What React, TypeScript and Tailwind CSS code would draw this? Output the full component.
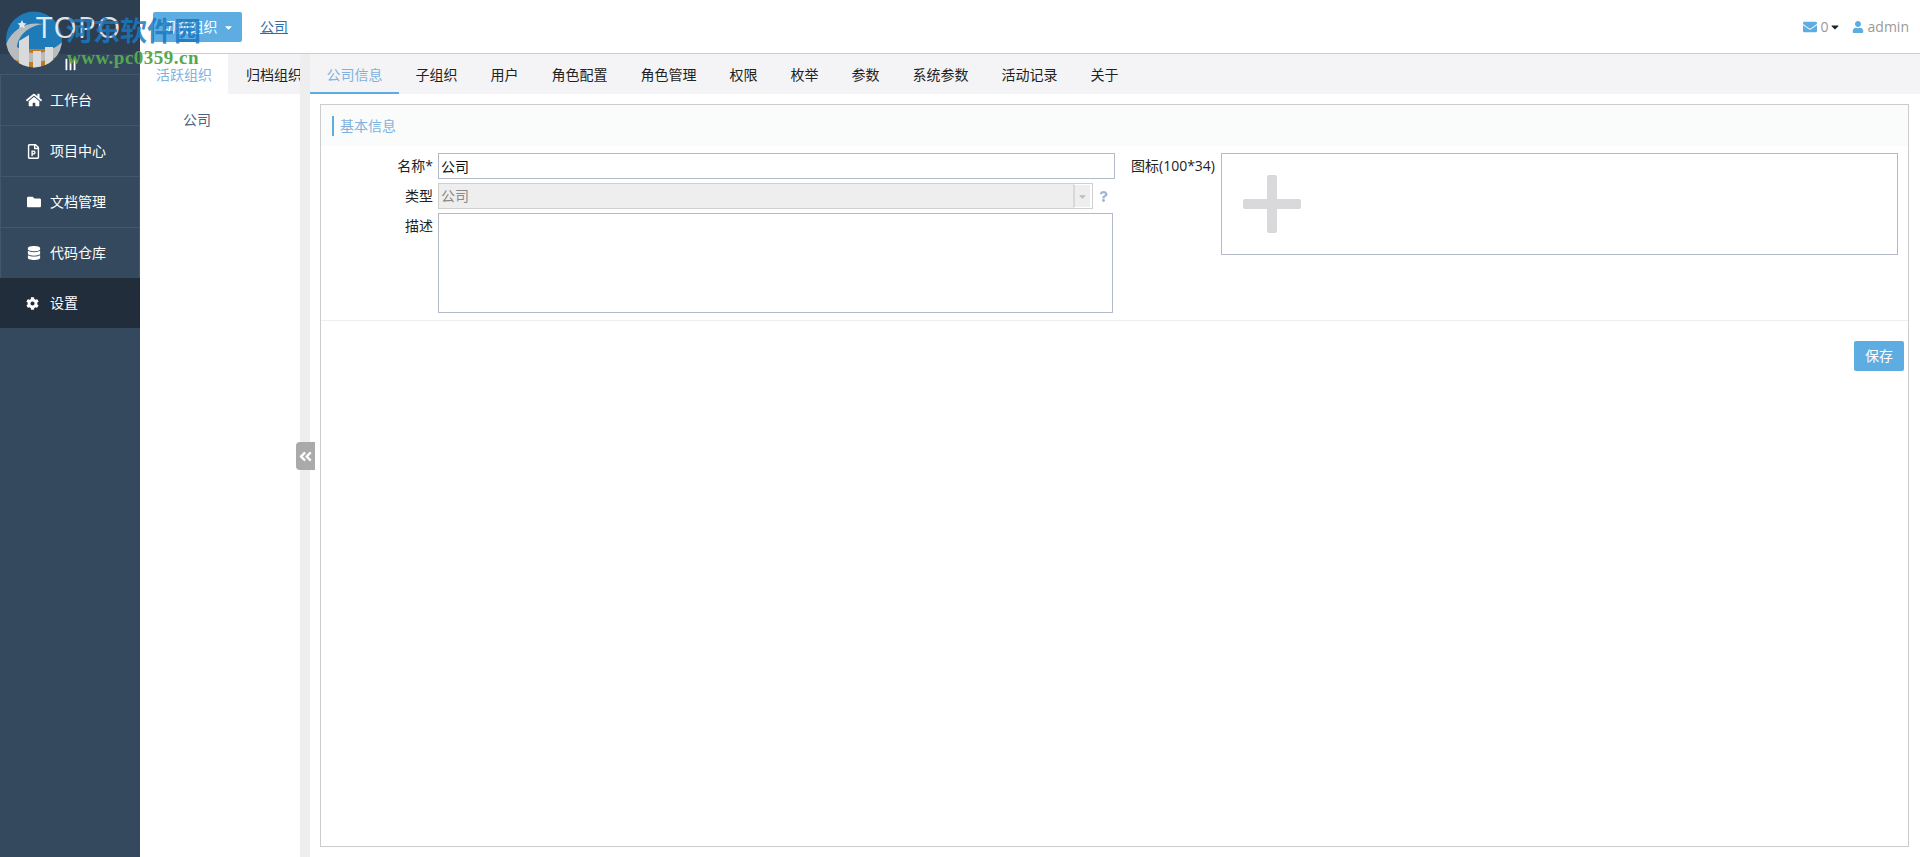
import { FaHome, FaRegFilePowerpoint, FaFolder, FaDatabase, FaCog, FaEnvelope, FaUser, FaAngleDoubleLeft, FaCaretDown, FaBars, FaQuestion } from 'react-icons/fa';

const MENU = [
  { name: '工作台', icon: FaHome, size: 16 },
  { name: '项目中心', icon: FaRegFilePowerpoint, size: 15 },
  { name: '文档管理', icon: FaFolder, size: 14 },
  { name: '代码仓库', icon: FaDatabase, size: 14 },
];

const TABS = ['子组织', '用户', '角色配置', '角色管理', '权限', '枚举', '参数', '系统参数', '活动记录', '关于'];

function WatermarkLogo() {
  return (
    <svg className="absolute left-[5px] top-[11px] z-[5]" width="58" height="57" viewBox="0 0 58 57">
      <defs>
        <clipPath id="disc">
          <circle cx="29" cy="28.5" r="28" />
        </clipPath>
      </defs>
      <g clipPath="url(#disc)">
        <rect width="58" height="57" fill="#1f7ab8" />
        <rect y="38" width="58" height="19" fill="#c07a22" />
        <path d="M0 36 C6 18 22 10 38 13 C24 15 13 24 12 36 C24 46 44 44 58 30 L58 42 C44 52 18 54 3 46 Z" fill="#b9bcbf" />
        <path d="M14 30 L24 24 L24 57 L14 57 Z" fill="#d8dadc" />
        <rect x="28" y="40" width="8" height="17" fill="#d8dadc" />
        <rect x="40" y="36" width="8" height="21" fill="#d8dadc" />
        <path d="M17 9 l1.4 3 3 .4 -2.2 2 .6 3 -2.8 -1.5 -2.8 1.5 .6 -3 -2.2 -2 3 -.4z" fill="#e5e7ea" />
      </g>
    </svg>
  );
}

function WatermarkText() {
  return (
    <div className="absolute left-0 top-0 z-20 h-[70px] w-[210px] pointer-events-none">
      <span className="absolute left-[66px] top-[10px] whitespace-nowrap text-[27px] leading-[40px] font-bold text-[#1a78c0]/85 font-['Noto_Sans_CJK_SC',sans-serif]">
        河东软件园
      </span>
      <span className="absolute left-[67px] top-[48px] whitespace-nowrap text-[19px] leading-[20px] font-bold tracking-[0.5px] text-[#55a84e] font-['Liberation_Serif',serif]">
        www.pc0359.cn
      </span>
    </div>
  );
}

function Sidebar() {
  return (
    <aside className="flex w-[140px] shrink-0 flex-col bg-[#34495e]">
      <div className="flex h-[54px] items-center bg-[#2c3e50] pl-[36px]">
        <span className="relative z-10 text-[30px] leading-none tracking-[1px] text-white/85">TOPO</span>
      </div>
      <div className="flex h-[20px] items-center justify-center">
        <FaBars className="rotate-90 text-white" size={13} />
      </div>
      {MENU.map((item) => (
        <div
          key={item.name}
          className="flex h-[51px] items-center gap-[10px] border-x border-t border-[#41576d] pl-[26px] text-sm text-white"
        >
          <span className="flex w-[13px] justify-center">
            <item.icon size={item.size} className="shrink-0" />
          </span>
          <span>{item.name}</span>
        </div>
      ))}
      <div className="flex h-[50px] items-center gap-[11px] bg-[#212d3b] pl-[26px] text-sm text-white">
        <FaCog size={13} />
        <span>设置</span>
      </div>
    </aside>
  );
}

export default function App() {
  return (
    <div className="relative flex h-screen w-full overflow-hidden bg-white font-['Open_Sans','Noto_Sans_CJK_SC',sans-serif] text-sm text-[#222]">
      <WatermarkLogo />
      <WatermarkText />
      <Sidebar />
      <div className="flex min-w-0 flex-1 flex-col">
        {/* Top bar */}
        <header className="flex h-[54px] shrink-0 items-center border-b border-[#cccccc] pl-[13px] pr-[11px] pt-[1px]">
          <button className="flex h-[30px] w-[89px] items-center justify-center gap-[5px] rounded-[2px] bg-[#5dade2] text-sm text-white">
            切换组织
            <FaCaretDown size={11} />
          </button>
          <a className="ml-[18px] text-sm text-[#2f6ea5] underline">公司</a>
          <div className="ml-auto flex items-center text-sm text-[#999]">
            <FaEnvelope className="text-[#5dade2]" size={14} />
            <span className="ml-[4px]">0</span>
            <FaCaretDown className="text-[#222]" size={12} />
            <FaUser className="ml-[11px] text-[#5dade2]" size={12} />
            <span className="ml-[4px]">admin</span>
          </div>
        </header>

        <div className="flex min-h-0 flex-1">
          {/* Organisation column */}
          <div className="flex w-[160px] shrink-0 flex-col overflow-hidden">
            <div className="flex h-[40px] shrink-0 whitespace-nowrap pt-[1px]">
              <div className="flex w-[88px] items-center justify-center text-[#7fb2e0]">活跃组织</div>
              <div className="mt-[-1px] flex w-[72px] items-center overflow-hidden rounded-bl-[2px] bg-[#f3f3f5] pl-[18px] pt-[1px] text-[#222]">
                <span>归档组织</span>
              </div>
            </div>
            <div className="pl-[43px] pt-[16px] text-[#4a6484]">公司</div>
          </div>

          {/* Gutter */}
          <div className="relative w-[10px] shrink-0 bg-[#eeeeee]">
            <div className="absolute left-[-4px] top-[388px] z-10 flex h-[28px] w-[19px] items-center justify-center rounded-l-[4px] bg-[#aaaaaa] text-white">
              <FaAngleDoubleLeft size={15} />
            </div>
          </div>

          {/* Main */}
          <main className="flex min-w-0 flex-1 flex-col">
            <nav className="flex h-[40px] shrink-0 bg-[#f4f4f6]">
              <div className="flex items-center border-b-[2px] border-[#5dade2] px-[16.5px] pt-[3px] text-[#7fb2e0]">公司信息</div>
              {TABS.map((tab) => (
                <div key={tab} className="flex items-center px-[16.5px] pt-[1px] text-[#222]">
                  {tab}
                </div>
              ))}
            </nav>

            <div className="mb-[10px] ml-[10px] mr-[11px] mt-[10px] flex min-h-0 flex-1 flex-col border border-[#cccccc]">
              <div className="flex h-[41px] shrink-0 items-center bg-[#fafbfb] pl-[11px]">
                <div className="flex h-[20px] items-center border-l-2 border-[#5dade2] pl-[6px] pt-[1px] text-[#7fb2e0]">基本信息</div>
              </div>

              <div className="flex h-[175px] shrink-0 border-b border-[#eeeeee] pt-[7px]">
                <div className="flex flex-col gap-[4px]">
                  <div className="flex h-[26px] items-center">
                    <label className="w-[117px] shrink-0 pr-[5px] text-right">名称*</label>
                    <input
                      readOnly
                      value="公司"
                      className="h-[26px] w-[677px] border border-[#b4bac8] px-[2px] text-sm text-[#111] outline-none"
                    />
                  </div>
                  <div className="flex h-[26px] items-center">
                    <label className="w-[117px] shrink-0 pr-[5px] text-right">类型</label>
                    <div className="flex h-[26px] w-[655px] border border-[#cfcfcf] bg-[#eeeeee]">
                      <span className="flex-1 pl-[2px] leading-[24px] text-[#888]">公司</span>
                      <span className="flex w-[19px] items-center justify-center border-x-2 border-y border-white border-l-[#d8d8d8] text-[#bbb]">
                        <FaCaretDown size={11} />
                      </span>
                    </div>
                    <FaQuestion className="ml-[5px] text-[#a3b5d6]" size={11} />
                  </div>
                  <div className="flex items-start">
                    <label className="w-[117px] shrink-0 pr-[5px] pt-[3px] text-right">描述</label>
                    <textarea className="h-[100px] w-[675px] resize-none border border-[#b4bac8] outline-none" />
                  </div>
                </div>

                <label className="ml-[16px] mt-[3px] w-[90px] shrink-0 whitespace-nowrap">图标(100*34)</label>
                <div className="flex h-[102px] w-[677px] shrink-0 items-center border border-[#b4bac8] pl-[21px]">
                  <div className="relative h-[58px] w-[58px]">
                    <div className="absolute left-[24px] top-0 h-[58px] w-[10px] rounded-[2px] bg-[#d9d9db]" />
                    <div className="absolute left-0 top-[24px] h-[10px] w-[58px] rounded-[2px] bg-[#d9d9db]" />
                  </div>
                </div>
              </div>

              <div className="flex justify-end pr-[4px] pt-[20px]">
                <button className="h-[30px] w-[50px] rounded-[2px] bg-[#5dade2] text-sm text-white">保存</button>
              </div>
            </div>
          </main>
        </div>
      </div>
    </div>
  );
}
